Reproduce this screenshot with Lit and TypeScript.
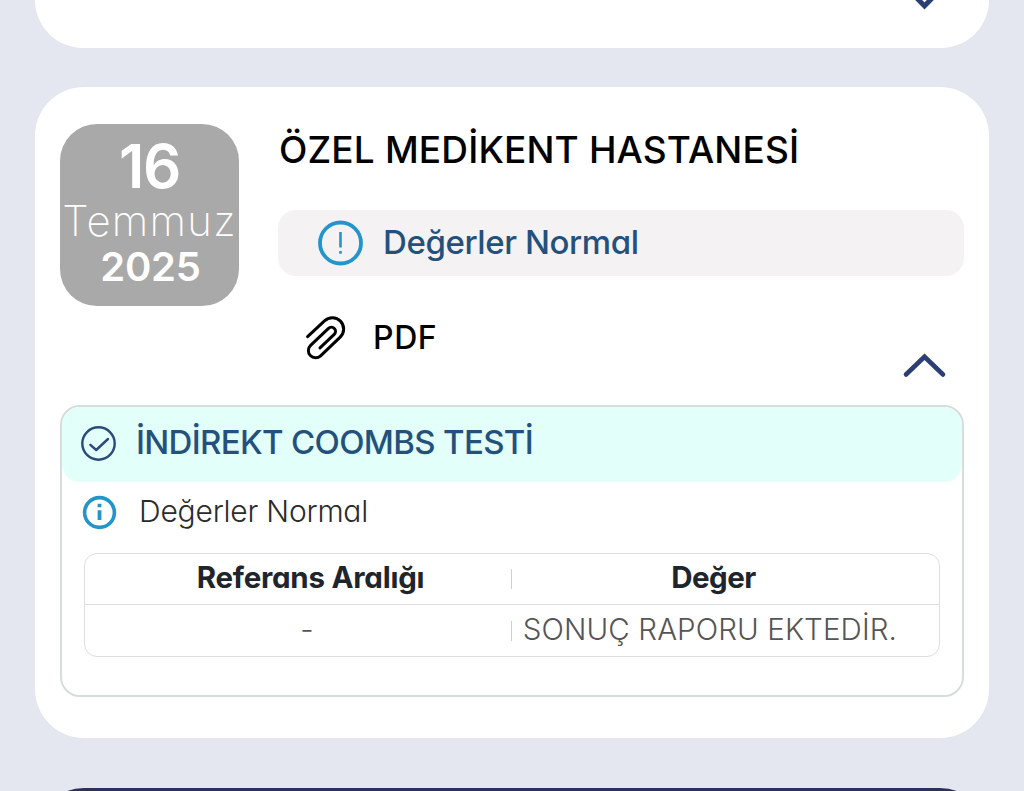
import { LitElement, html, css } from "lit";
import { customElement, property } from "lit/decorators.js";

interface TestResult {
  name: string;
  status: string;
  reference: string;
  value: string;
}

@customElement("date-badge")
export class DateBadge extends LitElement {
  @property() day = "";
  @property() month = "";
  @property() year = "";

  static styles = css`
    :host {
      display: flex;
      flex-direction: column;
      align-items: center;
      flex: none;
      box-sizing: border-box;
      width: 179px;
      height: 182px;
      padding-top: 12px;
      border-radius: 37px;
      background: #a9a9a9;
      color: #fff;
      white-space: nowrap;
    }

    .day {
      font-size: 60px;
      line-height: 60px;
      font-weight: 600;
      letter-spacing: -1.4px;
    }

    .month {
      font-size: 42px;
      line-height: 49px;
      font-weight: 250;
      letter-spacing: 1.2px;
    }

    .year {
      font-size: 40px;
      line-height: 43px;
      font-weight: 600;
      letter-spacing: -0.2px;
      padding-left: 2px;
    }
  `;

  render() {
    return html`
      <div class="day">${this.day}</div>
      <div class="month">${this.month}</div>
      <div class="year">${this.year}</div>
    `;
  }
}

@customElement("test-result")
export class TestResultBox extends LitElement {
  @property({ attribute: false }) result!: TestResult;

  static styles = css`
    :host {
      display: block;
      box-sizing: border-box;
      height: 292px;
      border: 2px solid #d9dcdc;
      border-radius: 20px;
      white-space: nowrap;
    }

    .header {
      display: flex;
      align-items: center;
      gap: 19px;
      box-sizing: border-box;
      height: 75px;
      padding: 0 0 5px 18px;
      border-radius: 18px;
      background: #e2fff9;
      color: #24507c;
      font-size: 33px;
      font-weight: 460;
      letter-spacing: -0.67px;
    }

    .status {
      display: flex;
      align-items: center;
      gap: 21px;
      height: 58px;
      padding-left: 19px;
      color: #2b2b2b;
      font-size: 30px;
      font-weight: 320;
      letter-spacing: -0.2px;
    }

    .header svg,
    .status svg {
      flex: none;
      margin-top: 3px;
    }

    .table {
      box-sizing: border-box;
      height: 104px;
      margin: 13px 22px 0;
      border: 1px solid #dedede;
      border-radius: 13px;
      font-size: 29.5px;
    }

    .row {
      display: grid;
      grid-template-columns: 426px 1px 1fr;
      align-items: center;
      height: 51px;
      text-align: center;
    }

    .row.head {
      height: 50px;
      border-bottom: 1px solid #dedede;
      color: #1e252c;
      font-weight: 680;
      letter-spacing: -0.25px;
    }

    .row.head span {
      padding-bottom: 5px;
    }

    .row.head span:first-child {
      padding-left: 25px;
    }

    .row.head span:last-child {
      padding-right: 24px;
      letter-spacing: -0.5px;
    }

    .row.body {
      color: #555;
      font-weight: 320;
      letter-spacing: 0.1px;
    }

    .row.body span:first-child {
      padding: 0 0 4px 18px;
    }

    .row.body span:last-child {
      padding: 0 42px 4px 0;
      text-align: right;
    }

    .divider {
      height: 20px;
      background: #cfcfcf;
    }
  `;

  render() {
    const { name, status, reference, value } = this.result;
    return html`
      <div class="header">
        <svg width="37" height="37" fill="none" stroke="#2a4a7c">
          <circle cx="18.5" cy="18.5" r="16.2" stroke-width="2.4" />
          <path
            d="M10.4 19.8L16.2 25L28 14"
            stroke-width="2.4"
            stroke-linecap="round"
            stroke-linejoin="round"
          />
        </svg>
        ${name}
      </div>
      <div class="status">
        <svg width="37" height="37" fill="none" stroke="#2495cb">
          <circle cx="18.5" cy="18.5" r="14.9" stroke-width="3.6" />
          <path d="M18.5 9.7v3.6M18.5 16.3v9.6" stroke-width="3.8" />
        </svg>
        ${status}
      </div>
      <div class="table">
        <div class="row head">
          <span>Referans Aralığı</span>
          <i class="divider"></i>
          <span>Değer</span>
        </div>
        <div class="row body">
          <span>${reference}</span>
          <i class="divider"></i>
          <span>${value}</span>
        </div>
      </div>
    `;
  }
}

@customElement("app-root")
export class AppRoot extends LitElement {
  result: TestResult = {
    name: "İNDİREKT COOMBS TESTİ",
    status: "Değerler Normal",
    reference: "-",
    value: "SONUÇ RAPORU EKTEDİR.",
  };

  static styles = css`
    :host {
      display: flex;
      flex-direction: column;
      box-sizing: border-box;
      height: 791px;
      padding: 0 35px;
      overflow: hidden;
      background: #e4e7f0;
      color: #000;
      font-family: Inter, "Liberation Sans", sans-serif;
      /* single-storey a */
      font-feature-settings: "cv11";
    }

    .card {
      flex: none;
      box-sizing: border-box;
      border-radius: 49px;
      background: #fff;
    }

    .card.previous {
      display: flex;
      justify-content: flex-end;
      align-items: flex-start;
      height: 48px;
      padding-right: 41px;
      border-radius: 0 0 49px 49px;
    }

    .card.previous svg {
      margin-top: -17px;
    }

    .card.current {
      height: 651px;
      margin-top: 39px;
      padding: 37px 25px 0;
    }

    .card.next {
      height: 120px;
      margin-top: 50px;
      background: #2b3158;
    }

    .top {
      display: flex;
      gap: 39px;
      height: 281px;
    }

    .info {
      flex: 1;
    }

    .title {
      height: 86px;
      padding-left: 1px;
      line-height: 51px;
      font-size: 37px;
      font-weight: 460;
      letter-spacing: 0.15px;
      white-space: nowrap;
    }

    .summary {
      display: flex;
      align-items: center;
      gap: 19px;
      height: 66px;
      padding-left: 39px;
      border-radius: 18px;
      background: #f5f2f3;
      color: #24507c;
      font-size: 33px;
      font-weight: 500;
      letter-spacing: -0.4px;
    }

    .summary span {
      padding-bottom: 3px;
    }

    .actions {
      display: flex;
      justify-content: space-between;
      padding: 34px 16px 0 18px;
    }

    .pdf {
      display: flex;
      align-items: center;
      gap: 17px;
      height: 56px;
      font-size: 32px;
      font-weight: 460;
      letter-spacing: 0.6px;
    }

    .pdf span {
      padding-bottom: 2px;
    }

    .toggle {
      margin-top: 40px;
    }
  `;

  render() {
    return html`
      <div class="card previous">
        <svg width="46" height="28" fill="none">
          <path
            d="M4.5 4.5L22.5 23L40.5 4.5"
            stroke="#2b3f75"
            stroke-width="5"
            stroke-linecap="round"
          />
        </svg>
      </div>
      <div class="card current">
        <div class="top">
          <date-badge day="16" month="Temmuz" year="2025"></date-badge>
          <div class="info">
            <div class="title">ÖZEL MEDİKENT HASTANESİ</div>
            <div class="summary">
              <svg width="47" height="46" fill="none" stroke="#2495cb">
                <circle cx="23.5" cy="23" r="20.5" stroke-width="3.8" />
                <path d="M23.5 12v15.5M23.5 31v2.8" stroke-width="2.6" />
              </svg>
              <span>Değerler Normal</span>
            </div>
            <div class="actions">
              <div class="pdf">
                <svg width="60" height="56" fill="none">
                  <path
                    d="M11.6 26.7L28.5 10.9A11.2 11.2 0 0 1 44.2 27.1L24.6 45.8A7.2 7.2 0 0 1 14.6 35.3L32.5 18.3A4.1 4.1 0 0 1 38.2 24.3L24 37.9"
                    stroke="#000"
                    stroke-width="3"
                    stroke-linecap="round"
                  />
                </svg>
                <span>PDF</span>
              </div>
              <svg class="toggle" width="46" height="30" fill="none">
                <path
                  d="M4 24.5L22.5 6.8L41 24.5"
                  stroke="#2b3f75"
                  stroke-width="4.6"
                  stroke-linecap="round"
                />
              </svg>
            </div>
          </div>
        </div>
        <test-result .result=${this.result}></test-result>
      </div>
      <div class="card next"></div>
    `;
  }
}
